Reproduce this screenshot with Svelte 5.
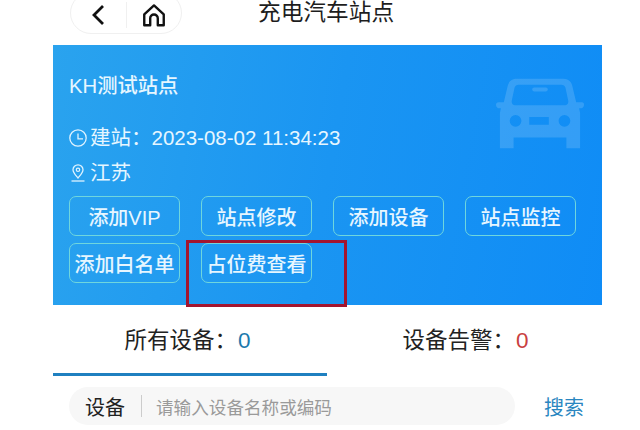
<script>
  const buttons = ["添加VIP", "站点修改", "添加设备", "站点监控", "添加白名单", "占位费查看"];
</script>

<div class="page">
  <header class="nav">
    <div class="capsule">
      <span class="cap-btn">
        <svg width="16" height="22" viewBox="0 0 16 22"><path d="M13 2 4 11l9 9" fill="none" stroke="#111" stroke-width="2.800"/></svg>
      </span>
      <span class="sep"></span>
      <span class="cap-btn">
        <svg width="26" height="26" viewBox="0 0 24 24"><path d="M3 11.500 12 3.200l9 8.300V21.500h-5.500v-6.500a3.500 3.500 0 0 0-7 0v6.500H3z" fill="none" stroke="#111" stroke-width="2.200" stroke-linejoin="round"/></svg>
      </span>
    </div>
    <div class="title">充电汽车站点</div>
  </header>

  <section class="card">
    <svg class="car" width="88" height="72" viewBox="0 0 90 72">
      <path fill="#fff" fill-opacity=".15" fill-rule="evenodd" d="M21 0h48c5 0 8 3 9 7l4 17h6c1.500 0 2 1 2 2.500S89 30 87.500 30H85l1 5v36H72V60H18v11H4V35l1-5H2.500C1 30 0 28 0 26.500S1 24 2.500 24h5.500l4-17c1-4 4-7 9-7zM23 6c-2 0-3.500 1-4 3l-3 14c0 2 1 4 3 4h52c2 0 3-2 3-4L71 9c-.500-2-2-3-4-3zM39 9h12c1 0 2 1 2 2s-1 2-2 2H39c-1 0-2-1-2-2s1-2 2-2zM20 37a6 6 0 1 0 0 12 6 6 0 0 0 0-12zm50 0a6 6 0 1 0 0 12 6 6 0 0 0 0-12zM34 39v8h20v-8z"/>
    </svg>
    <div class="name">KH测试站点</div>
    <div class="line built">
      <svg width="18" height="18" viewBox="0 0 18 18"><circle cx="9" cy="9" r="8.200" fill="none" stroke="#dff3ff" stroke-width="1.300"/><path d="M9 4.500V9.800h5" fill="none" stroke="#dff3ff" stroke-width="1.300"/></svg>
      <span>建站：2023-08-02 11:34:23</span>
    </div>
    <div class="line place">
      <svg width="18" height="18" viewBox="0 0 18 18"><path d="M9 14C6.200 10.800 4 8.700 4 5.800a5 5 0 0 1 10 0c0 2.900-2.200 5-5 8.200z" fill="none" stroke="#dff3ff" stroke-width="1.300"/><circle cx="9" cy="5.800" r="1.700" fill="none" stroke="#dff3ff" stroke-width="1.200"/><path d="M2.500 17h13" stroke="#dff3ff" stroke-width="1.300"/></svg>
      <span>江苏</span>
    </div>
    <div class="actions">
      {#each buttons as label}
        <button>{label}</button>
      {/each}
    </div>
    <div class="highlight"></div>
  </section>

  <div class="tabs">
    <div class="tab active">
      <span>所有设备：</span><b class="blue">0</b>
    </div>
    <div class="tab">
      <span>设备告警：</span><b class="red">0</b>
    </div>
  </div>

  <div class="search">
    <div class="field">
      <span class="kind">设备</span>
      <span class="divider"></span>
      <span class="hint">请输入设备名称或编码</span>
    </div>
    <span class="go">搜索</span>
  </div>
</div>

<style>
  :global(body) {
    margin: 0;
    background: #fff;
  }

  .page {
    width: 640px;
    height: 430px;
    overflow: hidden;
    font-family: "Liberation Sans", "Noto Sans CJK SC", sans-serif;
    color: #222;
  }

  .nav {
    height: 45px;
    display: flex;
    position: relative;
  }

  .capsule {
    margin: -8px 0 0 70px;
    width: 112px;
    height: 42px;
    border: 1px solid #f0f0f0;
    border-radius: 22px;
    display: flex;
    align-items: center;
    padding-top: 4px;
    box-sizing: border-box;
  }

  .cap-btn {
    flex: 1;
    display: flex;
    justify-content: center;
  }

  .sep {
    width: 1px;
    height: 26px;
    background: #f0f0f0;
  }

  .title {
    margin-left: 76px;
    font-size: 22.700px;
    line-height: 24px;
    color: #1d1d1d;
  }

  .card {
    position: relative;
    margin: 0 38px 0 53px;
    height: 260px;
    box-sizing: border-box;
    padding: 27px 26px 0 16px;
    background: linear-gradient(100deg, #2aa3ee 0%, #1a95f2 50%, #0f8cf6 100%);
    color: #e6f6ff;
  }

  .car {
    position: absolute;
    left: 443px;
    top: 33px;
  }

  .name {
    font-size: 20.300px;
    line-height: 28px;
    font-weight: 500;
  }

  .line {
    display: flex;
    align-items: center;
    gap: 3px;
    font-size: 20.500px;
    line-height: 26px;
  }

  .built {
    margin-top: 25px;
  }

  .place {
    margin-top: 9px;
  }

  .actions {
    margin-top: 10px;
    display: grid;
    grid-template-columns: repeat(4, 111px);
    column-gap: 21px;
    row-gap: 7px;
  }

  button {
    height: 40px;
    padding: 0;
    border: 1px solid #6fd6dd;
    border-radius: 7px;
    background: transparent;
    color: #e6f6ff;
    font: inherit;
    font-size: 20px;
    font-weight: 500;
    white-space: nowrap;
  }

  .highlight {
    position: absolute;
    left: 133px;
    top: 195px;
    width: 155px;
    height: 61px;
    border: 3px solid #a3152f;
  }

  .tabs {
    display: flex;
    margin-left: 53px;
    height: 70px;
    font-size: 22.500px;
  }

  .tab {
    width: 274px;
    height: 69px;
    display: flex;
    justify-content: center;
    padding: 22px 5px 0 0;
    box-sizing: border-box;
    line-height: 27px;
  }

  .tab.active {
    border-bottom: 3px solid #1f80c0;
    height: 71px;
  }

  .tab + .tab {
    margin-left: 3px;
    padding-right: 3px;
  }

  .tab b {
    font-weight: 400;
    margin-left: 1px;
  }

  .blue {
    color: #1c79ad;
  }

  .red {
    color: #c9403f;
  }

  .search {
    display: flex;
    align-items: center;
    margin: 12px 0 0 69px;
  }

  .field {
    width: 446px;
    height: 38px;
    border-radius: 20px;
    background: #f7f7f7;
    display: flex;
    align-items: center;
    box-sizing: border-box;
    padding-left: 16px;
  }

  .kind {
    font-size: 20px;
  }

  .divider {
    width: 1px;
    height: 22px;
    margin: 0 14px 0 16px;
    background: #ccc;
  }

  .hint {
    font-size: 17.600px;
    color: #9a9a9a;
  }

  .go {
    margin-left: 29px;
    font-size: 20px;
    color: #2a86c0;
  }
</style>
